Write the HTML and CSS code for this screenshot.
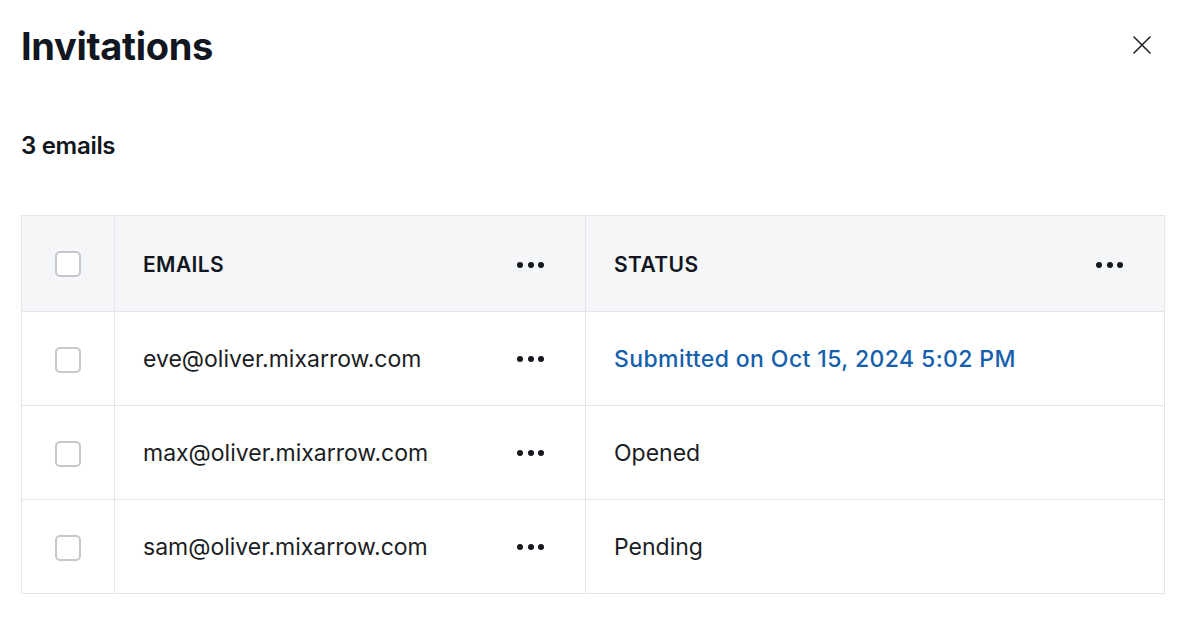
FILE: index.html
```html
<!DOCTYPE html>
<html>
<head>
<meta charset="utf-8">
<link rel="stylesheet" href="styles.css">
</head>
<body>
<div class="dialog">
  <header class="head">
    <h1 class="title">Invitations</h1>
    <button class="close" aria-label="Close">
      <svg width="18" height="18" viewBox="0 0 18 18"><path d="M1 1L17 17M17 1L1 17" stroke="#1f2329" stroke-width="1.6" stroke-linecap="round"/></svg>
    </button>
  </header>
  <h2 class="count">3 emails</h2>
  <table class="grid">
    <thead>
      <tr>
        <th class="c-check"><span class="box"></span></th>
        <th class="c-email"><div class="cell"><span>EMAILS</span><span class="dots"><i></i><i></i><i></i></span></div></th>
        <th class="c-status"><div class="cell"><span>STATUS</span><span class="dots"><i></i><i></i><i></i></span></div></th>
      </tr>
    </thead>
    <tbody>
      <tr>
        <td class="c-check"><span class="box"></span></td>
        <td class="c-email"><div class="cell"><span>eve@oliver.mixarrow.com</span><span class="dots"><i></i><i></i><i></i></span></div></td>
        <td class="c-status"><span class="link">Submitted on Oct 15, 2024 5:02 PM</span></td>
      </tr>
      <tr>
        <td class="c-check"><span class="box"></span></td>
        <td class="c-email"><div class="cell"><span>max@oliver.mixarrow.com</span><span class="dots"><i></i><i></i><i></i></span></div></td>
        <td class="c-status">Opened</td>
      </tr>
      <tr>
        <td class="c-check"><span class="box"></span></td>
        <td class="c-email"><div class="cell"><span>sam@oliver.mixarrow.com</span><span class="dots"><i></i><i></i><i></i></span></div></td>
        <td class="c-status">Pending</td>
      </tr>
    </tbody>
  </table>
</div>
</body>
</html>
```
FILE: styles.css
```css
html, body {
  margin: 0;
  background: #ffffff;
}
body {
  font-family: Inter, "Noto Sans", sans-serif;
  color: #15181e;
}
.dialog {
  padding: 22px 35px 0 21px;
}
.head {
  display: flex;
  justify-content: space-between;
  align-items: flex-start;
}
.title {
  margin: 0;
  font-size: 38px;
  line-height: 48px;
  font-weight: 700;
  letter-spacing: -0.3px;
  color: #121620;
}
.close {
  border: 0;
  background: none;
  padding: 0;
  margin: 14px 14px 0 0;
  width: 18px;
  height: 18px;
  display: block;
}
.close svg { display: block; }
.count {
  margin: 61px 0 0 0;
  font-size: 24px;
  line-height: 30px;
  font-weight: 600;
  letter-spacing: -0.3px;
  color: #121620;
}
.grid {
  margin-top: 54px;
  width: 100%;
  border-collapse: collapse;
  border: 1px solid #e3e5e8;
  font-size: 23px;
}
.grid th, .grid td {
  border: 1px solid #e3e5e8;
  padding: 0 41px 0 28px;
  text-align: left;
  vertical-align: middle;
}
.grid thead tr { height: 96px; background: #f5f6f8; }
.grid thead th { padding-top: 2px; }
.grid thead th.c-check { padding-top: 0; }
.grid tbody tr { height: 94px; }
.grid th {
  font-size: 21px;
  font-weight: 600;
  letter-spacing: 0.4px;
  color: #121620;
}
.grid td { color: #1b1e24; }
.grid .c-check {
  width: 93px;
  padding: 0;
  text-align: center;
  box-sizing: border-box;
}
.c-email { width: 401px; }
.box {
  display: inline-block;
  width: 26px;
  height: 26px;
  box-sizing: border-box;
  border: 2px solid #c4c7cc;
  border-radius: 5px;
  background: #fff;
  vertical-align: middle;
}
.cell {
  display: flex;
  justify-content: space-between;
  align-items: center;
}
.dots {
  display: flex;
  gap: 4.5px;
}
.dots i {
  width: 6px;
  height: 6px;
  border-radius: 50%;
  background: #15181e;
}
.link { color: #155fad; font-weight: 500; letter-spacing: 0.4px; }
```
